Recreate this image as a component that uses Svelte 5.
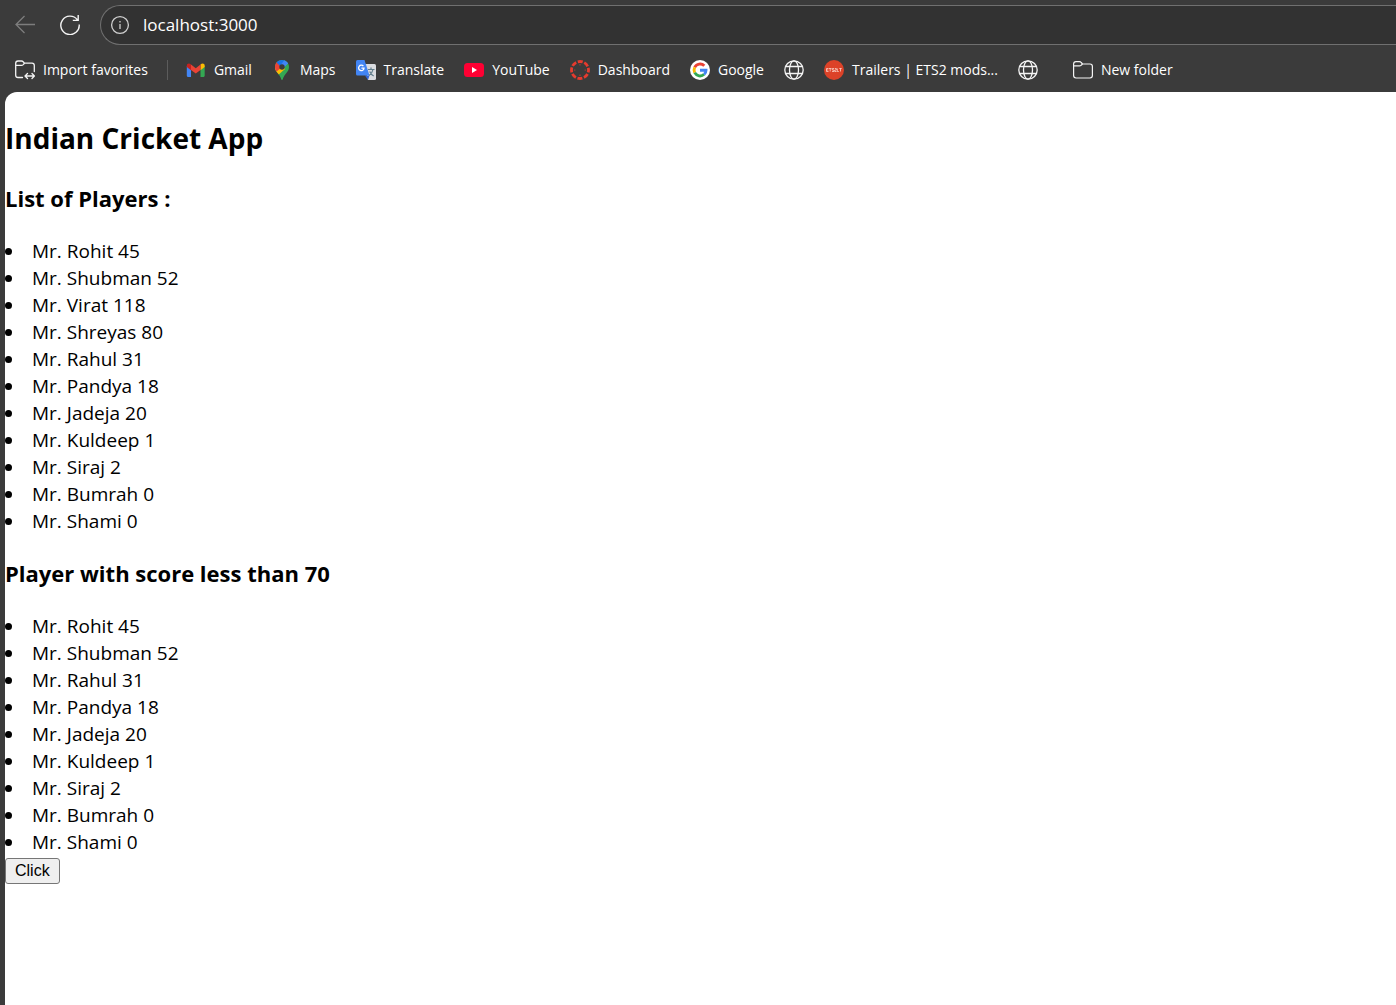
<script>
  const players = [
    { name: 'Rohit', score: 45 },
    { name: 'Shubman', score: 52 },
    { name: 'Virat', score: 118 },
    { name: 'Shreyas', score: 80 },
    { name: 'Rahul', score: 31 },
    { name: 'Pandya', score: 18 },
    { name: 'Jadeja', score: 20 },
    { name: 'Kuldeep', score: 1 },
    { name: 'Siraj', score: 2 },
    { name: 'Bumrah', score: 0 },
    { name: 'Shami', score: 0 }
  ];
  const below70 = players.filter((p) => p.score < 70);

  const bookmarks = [
    { icon: 'gmail', label: 'Gmail' },
    { icon: 'maps', label: 'Maps' },
    { icon: 'translate', label: 'Translate' },
    { icon: 'youtube', label: 'YouTube' },
    { icon: 'dashboard', label: 'Dashboard' },
    { icon: 'google', label: 'Google' },
    { icon: 'globe', label: '' },
    { icon: 'trailers', label: 'Trailers | ETS2 mods...' },
    { icon: 'globe', label: '' }
  ];
  let address = $state('localhost:3000');
</script>

{#snippet icon(name)}
  <svg class="icon" viewBox="0 0 20 20" aria-hidden="true">
    {#if name === 'gmail'}
      <path fill="#4285f4" d="M.8 6 5 9V17H2.300C1.300 17 .8 16.400 .8 15.500Z" />
      <path fill="#34a853" d="M14.500 9 18.700 6V15.500C18.700 16.400 18.200 17 17.200 17H14.500Z" />
      <path fill="#fbbc04" d="M14.500 4.600C16.200 2.700 18.700 3.500 18.700 5.700V7L14.500 10.200Z" />
      <path fill="#ea4335" d="M5 4.600 9.750 8.200 14.500 4.600V10L9.750 13.600 5 10Z" />
      <path fill="#c5221f" d="M5 4.600C3.300 2.700.8 3.500.8 5.700V7L5 10.200Z" />
    {:else if name === 'maps'}
      <clipPath id="pin"><path d="M10 0C5.900 0 3 3.100 3 7c0 3 1.500 4.500 3.200 6.700C8.300 16.400 8.700 17.500 9.200 19.200c.3 1 1.300 1 1.600 0 .5-1.700.9-2.800 3-5.500C15.500 11.500 17 10 17 7c0-3.900-2.900-7-7-7Z" /></clipPath>
      <g clip-path="url(#pin)">
        <path fill="#34a853" d="M0 0h20v20H0Z" />
        <path fill="#fbbc04" d="M2 8 8 3 13 9 5 16 1 12Z" />
        <path fill="#ea4335" d="M0 0 5 2 10 7 4 12 0 9Z" />
        <path fill="#1a73e8" d="M4.600 2.600 8 6 14 0H5Z" />
        <path fill="#4285f4" d="M12.500 0 8 6 11 8.500 16.500 3 16 0Z" />
      </g>
      <circle cx="10" cy="7" r="2.700" fill="#3b3b3b" />
    {:else if name === 'translate'}
      <path fill="#dadce0" d="M8 4h10.500Q20 4 20 5.500v13Q20 20 18.500 20H12Z" />
      <path fill="#3367d6" d="m9 15.500 4.500 0L12 20Z" />
      <path fill="#4285f4" d="M1.500 0H8.500L13.500 15.500H1.500Q0 15.500 0 14V1.500Q0 0 1.500 0Z" />
      <path fill="none" stroke="#fff" stroke-width="1.300" d="M7.400 6.200A2.700 2.700 0 1 0 8 8.200H5.400" />
      <path fill="none" stroke="#607d8b" stroke-width="1.200" d="M12 9.500h6.500M15 7.500v2M17 9.500q-.8 4-4 6M13.700 11.500q1.300 3 4 4.500" />
    {:else if name === 'youtube'}
      <rect y="3" width="20" height="14" rx="3.500" fill="#ff0033" />
      <path fill="#fff" d="m8 7 5 3-5 3Z" />
    {:else if name === 'dashboard'}
      <circle cx="10" cy="10" r="8.500" fill="none" stroke="#e63b2e" stroke-width="2.800" stroke-dasharray="5 1.676" stroke-dashoffset="2.500" />
      <g fill="#e63b2e"><circle cx="10" cy="4.800" r=".6" /><circle cx="15.200" cy="10" r=".6" /><circle cx="10" cy="15.200" r=".6" /><circle cx="4.800" cy="10" r=".6" /></g>
    {:else if name === 'google'}
      <circle cx="10" cy="10" r="10" fill="#fff" />
      <g fill="none" stroke-width="2.900">
        <path stroke="#ea4335" d="M4.700 7.300A6 6 0 0 1 14.300 5.800" />
        <path stroke="#fbbc04" d="M4.700 12.700A6 6 0 0 1 4.700 7.300" />
        <path stroke="#34a853" d="M14.100 14.300A6 6 0 0 1 4.700 12.700" />
        <path stroke="#4285f4" d="M10 10.200H16Q16 12.700 14.100 14.300" />
      </g>
    {:else if name === 'globe'}
      <g fill="none" stroke="#f4f4f4" stroke-width="1.300">
        <circle cx="10" cy="10" r="9.200" /><ellipse cx="10" cy="10" rx="4.500" ry="9.200" /><path d="M1.700 6.500H18.300M1.700 13.500H18.300" />
      </g>
    {:else if name === 'trailers'}
      <circle cx="10" cy="10" r="10" fill="#dc4228" />
      <path fill="none" stroke="#fbd3c8" stroke-width=".8" d="M4.500 8.500H2.500V11.500H4.500M2.500 10h1.800M5 8.500h2.500M6.200 8.500v3M10 8.500H8.300V10H10v1.500H8M10.800 8.500h1.500V10h-1.500v1.500h1.700M13.300 8.500v3h1.500M15.300 8.500h2.400M16.500 8.500v3" />
    {:else if name === 'folder'}
      <path fill="none" stroke="#f4f4f4" stroke-width="1.200" stroke-linejoin="round" d="M.6 4Q.6 1.600 3 1.600H6.500Q7.500 1.600 8.200 2.500L9.500 4H17Q19.400 4 19.400 6.400V15.600Q19.400 18 17 18H3Q.6 18 .6 15.600ZM.6 5.900H6.500Q7.500 5.900 8.200 5.200L9.500 4" />
    {:else if name === 'import'}
      <path fill="none" stroke="#f4f4f4" stroke-width="1.300" stroke-linecap="round" stroke-linejoin="round" d="M7.500 17.500H3Q.7 17.500.7 15.200V3.300Q.7 1 3 1H6.500Q7.500 1 8.200 1.800L9.500 3.200H17Q19.300 3.200 19.300 5.500V11.500M.7 5.300H6.500Q7.500 5.300 8.200 4.600L9.500 3.200M10.500 16H19M12.500 13.500 10 16l2.500 2.500M17 13.500 19.400 16 17 18.500" />
    {/if}
  </svg>
{/snippet}

{#snippet scores(list)}
  <ul>
    {#each list as p}
      <li>Mr. {p.name} {p.score}</li>
    {/each}
  </ul>
{/snippet}

<div class="browser">
  <div class="toolbar">
    <button class="tool" aria-label="Back" disabled>
      <svg viewBox="0 0 20 20" class="icon"><path fill="none" stroke="#7d7d7d" stroke-width="1.300" d="M20 9.500H1M9.500 1 1 9.500l8.500 8.500" /></svg>
    </button>
    <button class="tool" aria-label="Refresh">
      <svg viewBox="0 0 20 20" class="icon"><path fill="none" stroke="#f4f4f4" stroke-width="1.400" d="M17.300 4.700A9.200 9.200 0 1 0 19.200 9.500M18.200 0V5.400H12.800" /></svg>
    </button>
    <div class="address">
      <button class="info" aria-label="Site information">
        <svg viewBox="0 0 20 20" class="icon"><circle cx="10" cy="10" r="8.400" fill="none" stroke="#d0d0d0" stroke-width="1.300" /><path stroke="#d0d0d0" stroke-width="1.300" d="M10 9v5M10 6v1.600" /></svg>
      </button>
      <input type="text" aria-label="Address" bind:value={address} />
    </div>
  </div>

  <nav class="bookmarks" aria-label="Favorites">
    <button class="bookmark">{@render icon('import')}<span>Import favorites</span></button>
    <span class="divider"></span>
    {#each bookmarks as b}
      <a class="bookmark" href="#{b.icon}" aria-label={b.label || 'Website'}>
        {@render icon(b.icon)}{#if b.label}<span>{b.label}</span>{/if}
      </a>
    {/each}
    <button class="bookmark folder">{@render icon('folder')}<span>New folder</span></button>
  </nav>

  <main>
    <h1>Indian Cricket App</h1>
    <h2>List of Players :</h2>
    {@render scores(players)}
    <h2>Player with score less than 70</h2>
    {@render scores(below70)}
    <button class="click">Click</button>
  </main>
</div>

<style>
  :global(body) {
    margin: 0;
    background: #3b3b3b;
  }
  .browser {
    display: flex;
    flex-direction: column;
    min-height: 100vh;
    box-sizing: border-box;
    padding-left: 5px;
    overflow: hidden;
    font-family: 'Segoe UI', 'Open Sans', sans-serif;
    color: #000;
  }
  button {
    font: inherit;
  }
  .icon {
    display: block;
    flex: none;
    width: 20px;
    height: 20px;
  }
  .toolbar {
    display: flex;
    align-items: center;
    gap: 25px;
    padding: 5px 0 0 10px;
  }
  .tool,
  .info,
  .bookmark {
    padding: 0;
    border: 0;
    background: none;
    color: inherit;
  }
  .address {
    display: flex;
    flex: 1;
    align-items: center;
    gap: 13px;
    box-sizing: border-box;
    height: 40px;
    margin-left: -5px;
    padding-left: 9px;
    border: 1px solid #707070;
    border-right: 0;
    border-radius: 20px 0 0 20px;
    background: #323232;
  }
  .address input {
    flex: 1;
    min-width: 0;
    padding: 0;
    border: 0;
    outline: 0;
    background: none;
    color: #fff;
    font: 17px/24px 'Segoe UI', 'Open Sans', sans-serif;
  }
  .bookmarks {
    display: flex;
    align-items: center;
    gap: 20px;
    box-sizing: border-box;
    height: 47px;
    padding: 2px 0 0 10px;
    color: #fff;
    font-size: 14px;
    line-height: 20px;
    white-space: nowrap;
  }
  .bookmark {
    display: flex;
    align-items: center;
    gap: 8px;
    color: #fff;
    text-decoration: none;
  }
  .divider {
    width: 1px;
    height: 20px;
    margin: 0 -2px 0 -1px;
    background: #5c5c5c;
  }
  .folder {
    margin-left: 15px;
  }
  main {
    flex: 1;
    padding: 26px 0 20px;
    border-radius: 12px 0 0 0;
    background: #fff;
  }
  h1 {
    margin: 0 0 25px;
    font-size: 28px;
    line-height: 40px;
  }
  h2 {
    margin: 23px 0 25px;
    font-size: 22px;
    line-height: 30px;
  }
  ul {
    margin: 0;
    padding: 0;
    list-style-position: inside;
    font-size: 19px;
    line-height: 27px;
  }
  .click {
    display: block;
    height: 26px;
    margin-top: 2px;
    padding: 0 9px;
    border: 1px solid #767676;
    border-radius: 3px;
    background: #efefef;
    font-family: 'Liberation Sans', sans-serif;
    font-size: 16px;
    line-height: 22px;
  }
</style>
